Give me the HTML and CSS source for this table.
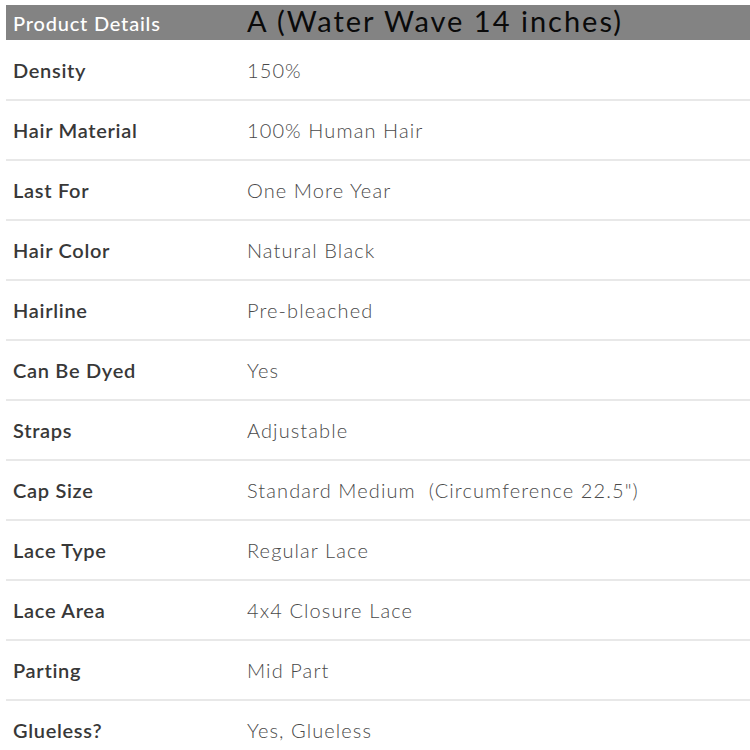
FILE: index.html
```html
<!DOCTYPE html>
<html>
<head>
<meta charset="utf-8">
<link rel="stylesheet" href="styles.css">
</head>
<body>
<div class="page">
  <div class="head">
    <div class="head-label">Product Details</div>
    <div class="head-value">A (Water Wave 14 inches)</div>
  </div>
  <div class="rows">
    <div class="row"><div class="label">Density</div><div class="value">150%</div></div>
    <div class="row"><div class="label">Hair Material</div><div class="value">100% Human Hair</div></div>
    <div class="row"><div class="label">Last For</div><div class="value">One More Year</div></div>
    <div class="row"><div class="label">Hair Color</div><div class="value">Natural Black</div></div>
    <div class="row"><div class="label">Hairline</div><div class="value">Pre-bleached</div></div>
    <div class="row"><div class="label">Can Be Dyed</div><div class="value">Yes</div></div>
    <div class="row"><div class="label">Straps</div><div class="value">Adjustable</div></div>
    <div class="row"><div class="label">Cap Size</div><div class="value">Standard Medium&nbsp; (Circumference 22.5")</div></div>
    <div class="row"><div class="label">Lace Type</div><div class="value">Regular Lace</div></div>
    <div class="row"><div class="label">Lace Area</div><div class="value">4x4 Closure Lace</div></div>
    <div class="row"><div class="label">Parting</div><div class="value">Mid Part</div></div>
    <div class="row last"><div class="label">Glueless?</div><div class="value">Yes, Glueless</div></div>
  </div>
</div>
</body>
</html>
```
FILE: styles.css
```css
html, body {
  margin: 0;
  padding: 0;
  background: #fff;
  overflow: hidden;
}
.page {
  padding: 5px 0 0 6px;
  font-family: Lato, "Open Sans", sans-serif;
}
.head {
  display: flex;
  align-items: center;
  height: 35px;
  background: #838383;
}
.head-label {
  width: 234px;
  padding-left: 7px;
  box-sizing: border-box;
  color: #fff;
  font-size: 20px;
  font-weight: 500;
  letter-spacing: 0.8px;
}
.head-value {
  padding-left: 7px;
  color: #0a0a0a;
  font-size: 29px;
  font-weight: 400;
  letter-spacing: 2px;
  line-height: 35px;
  margin-top: -4px;
}
.rows {
  margin-top: 1px;
}
.row {
  display: flex;
  align-items: center;
  height: 58px;
  border-bottom: 2px solid #e8e8e8;
}
.row.last {
  border-bottom: none;
}
.label {
  width: 234px;
  padding-left: 7px;
  box-sizing: border-box;
  color: #383838;
  font-size: 20px;
  font-weight: 600;
  letter-spacing: 0.7px;
}
.value {
  padding-left: 7px;
  color: #4a4a4a;
  font-size: 20px;
  font-weight: 300;
  letter-spacing: 1.1px;
  white-space: pre;
}
```
